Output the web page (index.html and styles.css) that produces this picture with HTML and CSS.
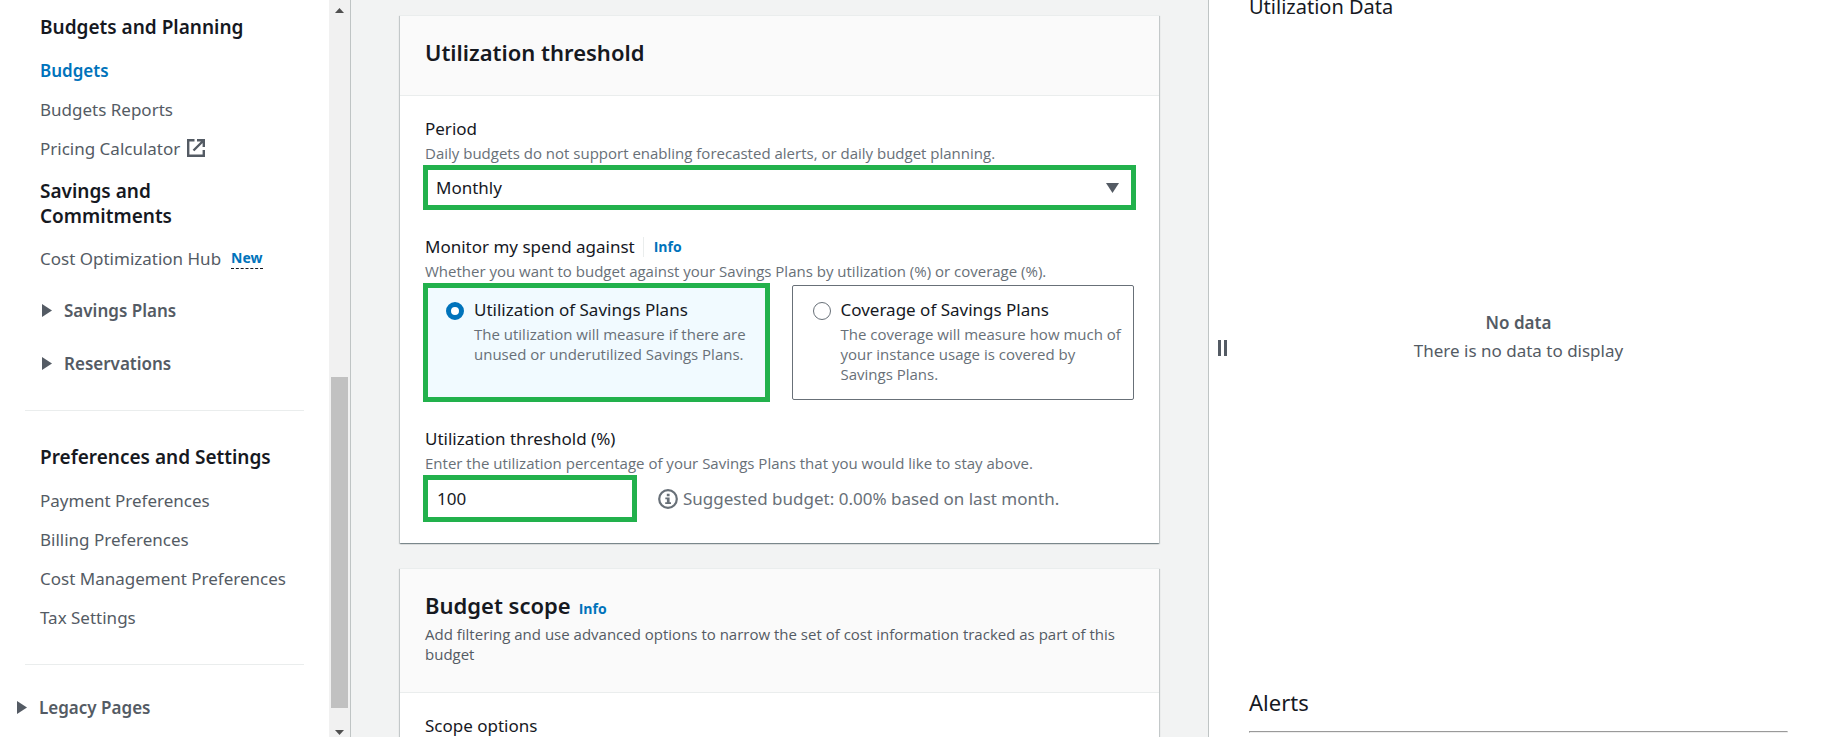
FILE: index.html
```html
<!DOCTYPE html>
<html lang="en">
<head>
<meta charset="utf-8">
<title>Create budget</title>
<link rel="stylesheet" href="styles.css">
</head>
<body>
<div class="app">
  <div class="sidebar">
    <nav class="nav" aria-label="Billing navigation">
      <section class="nav-section">
        <h2 class="nav-title">Budgets and Planning</h2>
        <ul class="nav-list">
          <li><a class="nav-link nav-link-active" href="#budgets">Budgets</a></li>
          <li><a class="nav-link" href="#reports">Budgets Reports</a></li>
          <li><a class="nav-link" href="#calculator">Pricing Calculator
            <svg class="external" viewBox="0 0 18 18" aria-hidden="true"><path d="M7.500 1.200H1.200v15.600h15.600V11M10 1.200h6.800V8M16.500 1.500 6.500 11.500" fill="none" stroke="currentColor" stroke-width="2.400"/></svg></a></li>
        </ul>
      </section>
      <section class="nav-section">
        <h2 class="nav-title nav-title-wrap">Savings and Commitments</h2>
        <div class="nav-row"><a class="nav-link" href="#hub">Cost Optimization Hub</a><button class="new-badge" type="button">New</button></div>
        <button class="expander" type="button"><svg class="caret" viewBox="0 0 12 13" aria-hidden="true"><path d="M2 0 12 6.500 2 13z"/></svg>Savings Plans</button>
        <button class="expander" type="button"><svg class="caret" viewBox="0 0 12 13" aria-hidden="true"><path d="M2 0 12 6.500 2 13z"/></svg>Reservations</button>
      </section>
      <hr class="nav-divider">
      <section class="nav-section">
        <h2 class="nav-title">Preferences and Settings</h2>
        <ul class="nav-list">
          <li><a class="nav-link" href="#payment">Payment Preferences</a></li>
          <li><a class="nav-link" href="#billing">Billing Preferences</a></li>
          <li><a class="nav-link" href="#cost">Cost Management Preferences</a></li>
          <li><a class="nav-link" href="#tax">Tax Settings</a></li>
        </ul>
      </section>
      <hr class="nav-divider">
      <button class="expander expander-root" type="button"><svg class="caret" viewBox="0 0 12 13" aria-hidden="true"><path d="M2 0 12 6.500 2 13z"/></svg>Legacy Pages</button>
    </nav>
    <div class="scrollbar" aria-hidden="true">
      <svg class="scroll-arrow" viewBox="0 0 9 5"><path d="M0 5 4.500 0 9 5z"/></svg>
      <div class="scroll-track"><div class="scroll-thumb"></div></div>
      <svg class="scroll-arrow" viewBox="0 0 9 5"><path d="M0 0 4.500 5 9 0z"/></svg>
    </div>
  </div>

  <main class="main">
    <section class="card">
      <header class="card-header"><h2 class="card-title">Utilization threshold</h2></header>
      <div class="card-body">
        <div class="field">
          <label class="label" for="period">Period</label>
          <p class="hint">Daily budgets do not support enabling forecasted alerts, or daily budget planning.</p>
          <div class="control select-wrap highlight">
            <select class="select" id="period"><option>Monthly</option></select>
            <svg class="select-caret" viewBox="0 0 13 10" aria-hidden="true"><path d="M0 0h13L6.500 10z"/></svg>
          </div>
        </div>
        <div class="field" role="radiogroup" aria-labelledby="monitor">
          <div class="label-row"><span class="label" id="monitor">Monitor my spend against</span><a class="info info-split" href="#monitor-info">Info</a></div>
          <p class="hint">Whether you want to budget against your Savings Plans by utilization (%) or coverage (%).</p>
          <div class="control tiles">
            <label class="tile tile-selected highlight">
              <input class="radio" type="radio" name="monitor" checked>
              <span class="tile-text"><span class="label">Utilization of Savings Plans</span><span class="hint">The utilization will measure if there are unused or underutilized Savings Plans.</span></span>
            </label>
            <label class="tile">
              <input class="radio" type="radio" name="monitor">
              <span class="tile-text"><span class="label">Coverage of Savings Plans</span><span class="hint">The coverage will measure how much of your instance usage is covered by Savings Plans.</span></span>
            </label>
          </div>
        </div>
        <div class="field">
          <label class="label" for="threshold">Utilization threshold (%)</label>
          <p class="hint">Enter the utilization percentage of your Savings Plans that you would like to stay above.</p>
          <div class="control threshold-row">
            <input class="input highlight" id="threshold" type="text" value="100">
            <p class="suggestion">
              <svg class="info-icon" viewBox="0 0 20 20" aria-hidden="true"><circle cx="10" cy="10" r="8.800" fill="none" stroke="currentColor" stroke-width="2.200"/><path d="M8.800 4.800h2.800v2.400H8.800zM7.300 8.400h4.300v4.800h1.400v1.900H7.200v-1.900h1.700v-2.900H7.300z" fill="currentColor"/></svg>
              Suggested budget: 0.00% based on last month.</p>
          </div>
        </div>
      </div>
    </section>
    <section class="card">
      <header class="card-header">
        <div class="title-row"><h2 class="card-title">Budget scope</h2><a class="info" href="#scope-info">Info</a></div>
        <p class="card-description">Add filtering and use advanced options to narrow the set of cost information tracked as part of this budget</p>
      </header>
      <div class="card-body"><span class="label">Scope options</span></div>
    </section>
  </main>

  <aside class="panel">
    <button class="handle" type="button" aria-label="Resize panel"></button>
    <div class="panel-content">
      <h3 class="chart-title">Utilization Data</h3>
      <div class="empty"><b>No data</b><span>There is no data to display</span></div>
      <h2 class="alerts-title">Alerts</h2>
      <hr class="panel-divider">
    </div>
  </aside>
</div>
</body>
</html>
```
FILE: styles.css
```css
* { box-sizing: border-box; }
html, body { height: 100%; }
body {
  margin: 0;
  overflow: hidden;
  background: #f2f3f3;
  color: #16191f;
  font: 17px/25px "Noto Sans", "Open Sans", sans-serif;
}
h2, h3, p, ul { margin: 0; padding: 0; }
ul { list-style: none; }
a { text-decoration: none; }
button, input, select { font: inherit; color: inherit; border: 0; padding: 0; background: none; margin: 0; }

.app { display: grid; grid-template-columns: 351px minmax(0, 1fr) 617px; height: 100vh; overflow: hidden; }

.sidebar { display: flex; background: #fff; border-right: 1px solid #bfc4c4; height: 100vh; }
.nav { flex: 1; min-width: 0; padding-top: 15px; color: #545b64; overflow: hidden; }
.nav-section { padding: 0 40px; }
.nav-divider + .nav-section { padding-top: 4px; }
.nav-title { color: #16191f; font-size: 19px; font-weight: 600; white-space: nowrap; margin-bottom: 18px; }
.nav-title-wrap { white-space: normal; max-width: 200px; margin-top: 18px; margin-bottom: 17px; }
.nav-list { display: grid; gap: 14px; }
.nav-link { color: #545b64; white-space: nowrap; }
.nav-link-active { color: #0073bb; font-weight: 600; }
.external { width: 18px; height: 18px; margin-left: 2px; vertical-align: -2px; }
.nav-row { display: flex; align-items: center; gap: 10px; margin-bottom: 27px; }
.new-badge { color: #0073bb; font-size: 14px; font-weight: 700; line-height: 20px; border-bottom: 1px dashed #16191f; }
.expander { display: flex; align-items: center; gap: 12px; font-weight: 600; color: #545b64; margin-bottom: 28px; }
.expander:last-child { margin-bottom: 0; }
.expander-root { padding-left: 15px; }
.caret { width: 12px; height: 13px; fill: #545b64; }
.nav-divider { border: 0; border-top: 1px solid #eaeded; margin: 34px 25px 30px; }

.scrollbar { width: 21px; background: #f1f1f1; display: flex; flex-direction: column; align-items: center; padding: 8px 0 2px; }
.scroll-arrow { width: 9px; height: 5px; fill: #505050; }
.scroll-track { flex: 1; width: 17px; display: grid; grid-template-rows: 364fr 331fr 22fr; }
.scroll-thumb { grid-row: 2; background: #c1c1c1; }

.main { padding: 15px 49px 0; overflow: hidden; }
.card {
  background: #fff;
  border-top: 1px solid #eaeded;
  box-shadow: 0 1px 1px 0 rgba(0, 28, 36, .3), 1px 1px 1px 0 rgba(0, 28, 36, .15), -1px 1px 1px 0 rgba(0, 28, 36, .15);
  margin-bottom: 25px;
}
.card-header { background: #fafafa; border-bottom: 1px solid #eaeded; padding: 21px 25px 28px; }
.card-title { font-size: 22px; line-height: 30px; font-weight: 600; }
.card-description { font: 15px/20px "Open Sans", "Noto Sans", sans-serif; color: #545b64; margin-top: 4px; }
.title-row { display: flex; align-items: baseline; gap: 8px; }
.card-body { padding: 20px 25px 23px; display: grid; gap: 26px; }
.label { display: block; color: #16191f; }
.label-row { display: flex; align-items: center; }
.hint { display: block; color: #687078; font: 15px/20px "Open Sans", "Noto Sans", sans-serif; margin-top: 2px; }
.control { margin-top: 4px; }
.info { color: #0073bb; font: 700 14px/20px "Open Sans", "Noto Sans", sans-serif; }
.info-split { border-left: 1px solid #eaeded; margin-left: 8px; padding-left: 10px; }
.highlight { outline: 5px solid #22b14c; outline-offset: -3px; }
.select-wrap { display: flex; align-items: center; }
.select { appearance: none; flex: 1; height: 41px; padding: 0 11px; }
.select-caret { width: 13px; height: 10px; margin-right: 15px; fill: #545b64; pointer-events: none; }
.tiles { display: grid; grid-template-columns: 1fr 1fr; gap: 24px; }
.tile { display: flex; gap: 10px; border: 1px solid #687078; border-radius: 2px; padding: 11px 8px 15px 20px; }
.tile-selected { background: #f1faff; border-color: #22b14c; border-radius: 0; }
.radio { appearance: none; flex: none; width: 18px; height: 18px; margin-top: 5px; border: 1px solid #687078; border-radius: 50%; background: #fff; }
.radio:checked { border: 5px solid #0073bb; }
.threshold-row { display: flex; align-items: center; gap: 23px; }
.input { width: 210px; height: 43px; padding: 0 12px; background: #fff; }
.suggestion { display: flex; align-items: center; gap: 5px; color: #687078; white-space: nowrap; }
.info-icon { width: 20px; height: 20px; }

.panel { background: #fff; border-left: 1px solid #bfc4c4; display: flex; align-items: flex-start; }
.handle { width: 9px; height: 16px; margin: 340px 22px 0 9px; border: solid #545b64; border-width: 0 3px; }
.panel-content { flex: 1; padding-right: 37px; }
.chart-title { font-size: 20px; font-weight: 400; line-height: 24px; margin-top: -5px; }
.empty { display: grid; gap: 3px; text-align: center; color: #545b64; padding: 291px 0 324px; }
.empty b { font-weight: 600; }
.alerts-title { font-size: 22px; font-weight: 400; line-height: 30px; }
.panel-divider { border: 1px inset #eee; margin: 14px 0 0; }
```
